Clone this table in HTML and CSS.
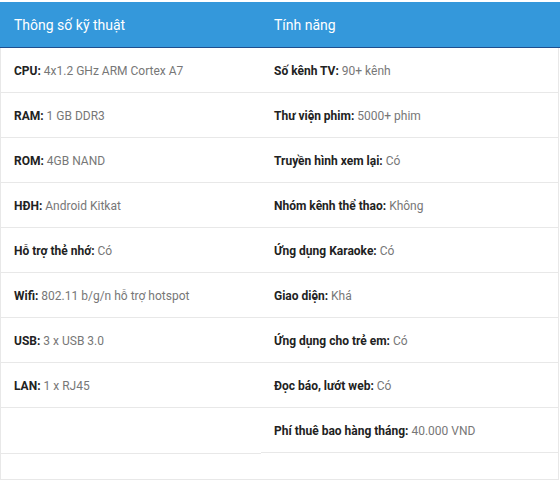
FILE: index.html
```html
<!DOCTYPE html>
<html lang="vi">
<head>
<meta charset="utf-8">
<link rel="stylesheet" href="styles.css">
</head>
<body>
<div class="specs">
  <div class="head">
    <div class="hcell left">Thông số kỹ thuật</div>
    <div class="hcell right">Tính năng</div>
  </div>
  <div class="body">
    <div class="col left">
      <div class="row"><b>CPU:</b> 4x1.2 GHz ARM Cortex A7</div>
      <div class="row"><b>RAM:</b> 1 GB DDR3</div>
      <div class="row"><b>ROM:</b> 4GB NAND</div>
      <div class="row"><b>HĐH:</b> Android Kitkat</div>
      <div class="row"><b>Hỗ trợ thẻ nhớ:</b> Có</div>
      <div class="row"><b>Wifi:</b> 802.11 b/g/n hỗ trợ hotspot</div>
      <div class="row"><b>USB:</b> 3 x USB 3.0</div>
      <div class="row"><b>LAN:</b> 1 x RJ45</div>
      <div class="row empty tall"></div>
    </div>
    <div class="col right">
      <div class="row"><b>Số kênh TV:</b> 90+ kênh</div>
      <div class="row"><b>Thư viện phim:</b> 5000+ phim</div>
      <div class="row"><b>Truyền hình xem lại:</b> Có</div>
      <div class="row"><b>Nhóm kênh thể thao:</b> Không</div>
      <div class="row"><b>Ứng dụng Karaoke:</b> Có</div>
      <div class="row"><b>Giao diện:</b> Khá</div>
      <div class="row"><b>Ứng dụng cho trẻ em:</b> Có</div>
      <div class="row"><b>Đọc báo, lướt web:</b> Có</div>
      <div class="row"><b>Phí thuê bao hàng tháng:</b> 40.000 VND</div>
    </div>
  </div>
</div>
</body>
</html>
```
FILE: styles.css
```css
html, body {
  margin: 0;
  padding: 0;
  background: #fff;
}
body {
  padding-top: 2px;
  font-family: Roboto, "Liberation Sans", sans-serif;
}
.specs {
  width: 560px;
}
.head {
  display: flex;
  height: 45px;
  background: #3498db;
  border-bottom: 1px solid #1f4f8f;
  color: #fff;
  font-size: 14px;
}
.hcell {
  display: flex;
  align-items: center;
  padding-left: 14px;
}
.hcell.left {
  width: 247px;
}
.hcell.right {
  padding-left: 13px;
}
.body {
  display: flex;
  width: 557px;
  height: 431px;
  border: 1px solid #e8e8e8;
  border-top: 0;
}
.col.left {
  width: 260px;
}
.col.right {
  flex: 1;
}
.row {
  height: 42px;
  padding-top: 2px;
  border-bottom: 1px solid #e8e8e8;
  display: flex;
  align-items: center;
  padding-left: 13px;
  font-size: 12px;
  color: #777;
  white-space: pre;
}
.row b {
  color: #222;
  font-weight: 700;
}
.row.tall {
  height: 43px;
}
```
